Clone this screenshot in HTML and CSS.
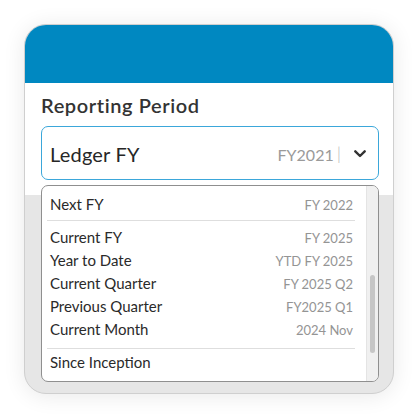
FILE: index.html
```html
<!DOCTYPE html>
<html>
<head>
<meta charset="utf-8">
<link rel="stylesheet" href="styles.css">
</head>
<body>
<div class="card">
  <div class="card-header"></div>
  <div class="card-top">
    <h2 class="title">Reporting Period</h2>
    <div class="field">
      <div class="select">
        <span class="select-label">Ledger FY</span>
        <span class="select-value">FY2021</span>
        <span class="select-bar">|</span>
        <svg class="chevron" width="12" height="8" viewBox="0 0 12 8"><path d="M1.3 1.3 L6 6 L10.7 1.3" fill="none" stroke="#333" stroke-width="2.4" stroke-linecap="round" stroke-linejoin="round"/></svg>
      </div>
      <div class="menu">
        <div class="menu-list">
          <div class="item"><span class="item-name">Next FY</span><span class="item-val">FY 2022</span></div>
          <div class="sep sep-a"></div>
          <div class="item"><span class="item-name">Current FY</span><span class="item-val">FY 2025</span></div>
          <div class="item"><span class="item-name">Year to Date</span><span class="item-val">YTD FY 2025</span></div>
          <div class="item"><span class="item-name">Current Quarter</span><span class="item-val">FY 2025 Q2</span></div>
          <div class="item"><span class="item-name">Previous Quarter</span><span class="item-val">FY2025 Q1</span></div>
          <div class="item"><span class="item-name">Current Month</span><span class="item-val">2024 Nov</span></div>
          <div class="sep sep-b"></div>
          <div class="item"><span class="item-name">Since Inception</span><span class="item-val"></span></div>
        </div>
        <div class="track"><div class="thumb"></div></div>
      </div>
    </div>
  </div>
  <div class="card-bottom"></div>
</div>
</body>
</html>
```

FILE: styles.css
```css
html, body {
  margin: 0;
  padding: 0;
  background: #ffffff;
}
body {
  width: 417px;
  height: 417px;
  font-family: Lato, "Noto Sans", sans-serif;
  color: #2e2e2e;
  padding: 24px 0 0 24px;
  box-sizing: border-box;
}
.card {
  width: 370px;
  height: 370px;
  box-sizing: border-box;
  border: 1px solid #cfcfcf;
  border-radius: 22px;
  overflow: hidden;
  display: flex;
  flex-direction: column;
  box-shadow: 0 2px 22px rgba(0, 0, 0, 0.09);
  background: #e6e6e6;
}
.card-header {
  height: 58px;
  background: #0088c1;
  flex: none;
}
.card-top {
  background: #ffffff;
  height: 112px;
  flex: none;
  padding: 10px 14px 0 16px;
  box-sizing: border-box;
}
.title {
  margin: 0;
  font-size: 20px;
  line-height: 24px;
  font-weight: 600;
  color: #333333;
  letter-spacing: 0.6px;
}
.field {
  position: relative;
  margin-top: 9px;
}
.select {
  height: 54px;
  box-sizing: border-box;
  border: 1px solid #3ba7da;
  border-radius: 7px;
  display: flex;
  align-items: center;
  padding: 0 12px 0 8px;
}
.select-label {
  font-size: 20px;
  color: #262626;
  flex: 1;
  padding-top: 1px;
  letter-spacing: 0.2px;
}
.select-value {
  font-size: 16px;
  color: #9a9a9a;
  padding-top: 2px;
}
.select-bar {
  font-size: 18px;
  color: #b8b8b8;
  margin-left: 3px;
  margin-right: 13px;
  font-weight: 300;
}
.chevron {
  display: block;
  margin-top: 2px;
}
.menu {
  position: absolute;
  left: 0;
  right: 0;
  top: 59px;
  height: 197px;
  box-sizing: border-box;
  border: 1px solid #8f8f8f;
  border-radius: 7px;
  background: #ffffff;
  display: flex;
  overflow: hidden;
}
.menu-list {
  flex: 1;
  padding-top: 7px;
}
.item {
  display: flex;
  justify-content: space-between;
  align-items: baseline;
  height: 23px;
  line-height: 23px;
  padding: 0 13px 0 8px;
}
.item-name {
  font-size: 15px;
  color: #2a2a2a;
}
.item-val {
  font-size: 13px;
  color: #949494;
}
.sep {
  height: 1px;
  background: #dedede;
  margin-left: 5px;
  margin-right: 11px;
}
.sep-a {
  margin-top: 4px;
  margin-bottom: 5px;
}
.sep-b {
  margin-top: 7px;
  margin-bottom: 2px;
}
.track {
  width: 11px;
  background: #f0f0f0;
  border-left: 1px solid #e4e4e4;
  position: relative;
  flex: none;
}
.thumb {
  position: absolute;
  left: 3px;
  width: 5px;
  top: 89px;
  height: 78px;
  background: #c6c6c6;
  border-radius: 3px;
}
```
